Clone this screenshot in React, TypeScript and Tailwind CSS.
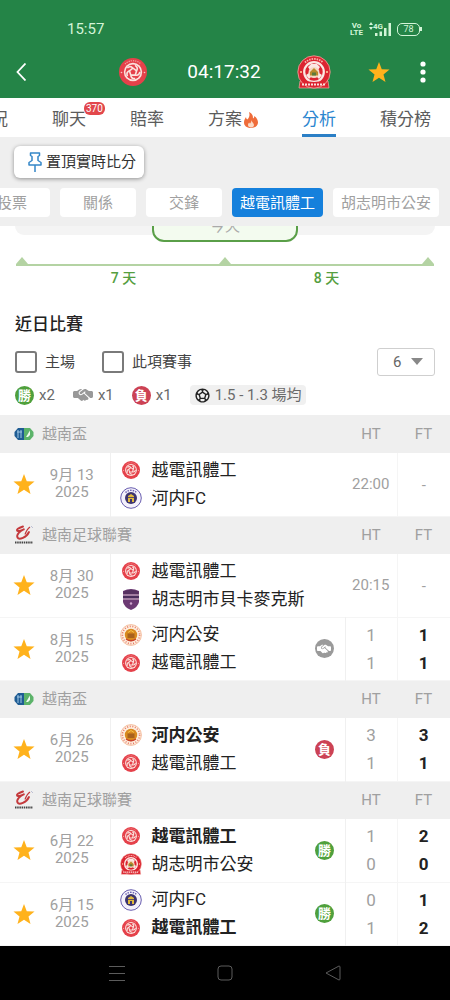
import { ReactNode } from 'react';
import { FaHandshakeSimple } from 'react-icons/fa6';
import { MdSportsSoccer } from 'react-icons/md';

type Club = 'viettel' | 'hanoi' | 'becamex' | 'congan' | 'hcmc';
type Result = 'win' | 'draw' | 'loss';

interface Match {
  date: string;
  year: string;
  clubs: [Club, Club];
  winner?: 0 | 1;
  result?: Result;
  time?: string;
  ht?: [number, number];
  ft?: [number, number];
}

const CLUB_NAMES: Record<Club, string> = {
  viettel: '越電訊體工',
  hanoi: '河内FC',
  becamex: '胡志明市貝卡麥克斯',
  congan: '河内公安',
  hcmc: '胡志明市公安',
};

const LEAGUES: { name: string; cup: boolean; matches: Match[] }[] = [
  {
    name: '越南盃',
    cup: true,
    matches: [{ date: '9月 13', year: '2025', clubs: ['viettel', 'hanoi'], time: '22:00' }],
  },
  {
    name: '越南足球聯賽',
    cup: false,
    matches: [
      { date: '8月 30', year: '2025', clubs: ['viettel', 'becamex'], time: '20:15' },
      { date: '8月 15', year: '2025', clubs: ['congan', 'viettel'], result: 'draw', ht: [1, 1], ft: [1, 1] },
    ],
  },
  {
    name: '越南盃',
    cup: true,
    matches: [{ date: '6月 26', year: '2025', clubs: ['congan', 'viettel'], winner: 0, result: 'loss', ht: [3, 1], ft: [3, 1] }],
  },
  {
    name: '越南足球聯賽',
    cup: false,
    matches: [
      { date: '6月 22', year: '2025', clubs: ['viettel', 'hcmc'], winner: 0, result: 'win', ht: [1, 0], ft: [2, 0] },
      { date: '6月 15', year: '2025', clubs: ['hanoi', 'viettel'], winner: 1, result: 'win', ht: [0, 1], ft: [1, 2] },
    ],
  },
];

const CHIPS = ['投票', '關係', '交鋒', '越電訊體工', '胡志明市公安'];

function Star({ className }: { className: string }) {
  return (
    <svg viewBox="0 0 24 24" className={className} fill="#ffb21c">
      <path d="M12 1l3 7.9 8.5.4-6.6 5.3 2.2 8.2-7.1-4.6-7.1 4.6 2.2-8.2L.5 9.3 9 8.900z" />
    </svg>
  );
}

function ViettelCrest({ className }: { className: string }) {
  return (
    <svg viewBox="0 0 28 28" className={className}>
      <circle cx="14" cy="14" r="14" fill="#e5414a" />
      <path d="M6 6a11.400 11.400 0 0 1 16 0" fill="none" stroke="#f4a09f" strokeWidth="1.200" strokeDasharray="1.200 1" />
      <circle cx="2.500" cy="14.500" r=".8" fill="#f9c6c2" />
      <circle cx="25.500" cy="14.500" r=".8" fill="#f9c6c2" />
      <circle cx="14" cy="14" r="9.200" fill="#fbe3de" />
      <circle cx="14" cy="14" r="7.600" fill="#e5414a" />
      {[0, 72, 144, 216, 288].map((a) => (
        <path key={a} d="M14 10.200l3.600 2.600M14 10.200C12 8 10 8.500 8.300 10" transform={`rotate(${a} 14 14)`} fill="none" stroke="#fbe3de" strokeWidth="1.600" />
      ))}
    </svg>
  );
}

function HcmcCrest({ className }: { className: string }) {
  return (
    <svg viewBox="0 0 34 34" className={className}>
      <path d="M3 26h28l1 7H2z" fill="#dc2430" stroke="#f2a8a0" strokeWidth=".7" />
      <circle cx="17" cy="17" r="16.200" fill="#dc2430" stroke="#f2a8a0" strokeWidth=".8" />
      <path d="M8 7.500a13 13 0 0 1 18 0" fill="none" stroke="#f6b3ac" strokeWidth="1.800" strokeDasharray="1.500 1" />
      <circle cx="17" cy="17" r="9.800" fill="none" stroke="#fbe9e4" strokeWidth="2.200" />
      <path d="M11 12l3-3h6l3 3-2 3h-8zM9 20l3-2 2 4-2 2zM25 20l-3-2-2 4 2 2z" fill="#fbe9e4" />
      <circle cx="17" cy="17.500" r="5.500" fill="#f6d9c4" />
      <path d="M13 20.500V17l4-4 4 4v3.500z" fill="#b98a2b" />
      <path d="M15 20.500v-3h4v3z" fill="#5c7a3a" />
      <path d="M7 25c6 2.500 14 2.500 20 0v5H7z" fill="#dc2430" />
      <path d="M5 29.500h24" stroke="#fbe0dc" strokeWidth="2" strokeDasharray="2 1" />
      <circle cx="4" cy="17" r="1" fill="#ffd4a0" />
      <circle cx="30" cy="17" r="1" fill="#ffd4a0" />
    </svg>
  );
}

function Crest({ club }: { club: Club }) {
  if (club === 'viettel') return <ViettelCrest className="size-[18px]" />;
  if (club === 'hcmc') return <HcmcCrest className="size-[22px]" />;
  if (club === 'hanoi') {
    return (
      <svg viewBox="0 0 22 22" className="size-[22px]">
        <circle cx="11" cy="11" r="10.300" fill="#f4f1fb" stroke="#6a5fb0" strokeWidth="1" />
        <path d="M5.500 5.500a8 8 0 0 1 11 0" fill="none" stroke="#6a5fb0" strokeWidth="1.400" strokeDasharray="1.500 1" />
        <circle cx="11" cy="11" r="6" fill="#3d3470" />
        <path d="M8 15V9l3-2 3 2v6h-2v-3h-2v3z" fill="#e0b93c" />
        <path d="M8 10.500h6" stroke="#3d3470" strokeWidth=".8" />
      </svg>
    );
  }
  if (club === 'becamex') {
    return (
      <svg viewBox="0 0 18 22" className="h-[22px] w-[18px]">
        <path d="M1 3q8-4 16 0v11q-1 5-8 8-7-3-8-8z" fill="#6c3a73" />
        <path d="M1.500 3.500q7.500-3.500 15 0v2.500h-15z" fill="#553060" />
        <path d="M1 7h16M1 11h16" stroke="#d8bfd0" strokeWidth="1" />
        <path d="M1 9h16" stroke="#3f2a55" strokeWidth="1.500" />
        <circle cx="9" cy="15.500" r="1.200" fill="#cfa6cf" />
      </svg>
    );
  }
  return (
    <svg viewBox="0 0 22 22" className="size-[22px]">
      <circle cx="11" cy="11" r="10.400" fill="#fdeede" stroke="#f2b08c" strokeWidth=".8" />
      <circle cx="11" cy="11" r="8.600" fill="none" stroke="#e8796a" strokeWidth="1.600" strokeDasharray="1 1.600" />
      <circle cx="11" cy="11" r="6.200" fill="#d98a1f" />
      <path d="M7.500 9.500h7v4.500h-7z" fill="#a8611c" />
      <path d="M8 8.500l3-2 3 2" fill="none" stroke="#f5c64a" strokeWidth=".9" />
      <path d="M6 15q5 3.500 10 0" fill="none" stroke="#c8402c" strokeWidth="1.300" />
    </svg>
  );
}

function LeagueLogo({ cup }: { cup: boolean }) {
  if (cup) {
    return (
      <svg viewBox="0 0 20 14" className="h-[14px] w-5">
        <path d="M4 1h7v12H4L.5 9V5z" fill="#1f5c93" />
        <path d="M10 1h6l3.500 4v4L16 13h-6z" fill="#5cb36a" />
        <path d="M4 3v8M7 3v8M3 5h5" stroke="#9fc6e4" strokeWidth="1" />
        <path d="M12 10l4-6.500v4.500l-2 2z" fill="#effaf0" />
      </svg>
    );
  }
  return (
    <svg viewBox="0 0 20 20" className="size-5">
      <path d="M9 1.500C6 2.500 2.500 4 3 5.500S8 5 10.500 4C6 6 2 9.500 3.500 12.500s9 0 11.500-5.500" fill="none" stroke="#c4393c" strokeWidth="1.900" strokeLinecap="round" />
      <path d="M11 9.500q2-5.500 5-7.500" fill="none" stroke="#c4393c" strokeWidth="1.200" />
      <path d="M17.500 1.500l1 1" stroke="#8a8fb8" strokeWidth="1" />
      <path d="M1 17.500h18" stroke="#444" strokeWidth="2" strokeDasharray="1.500 .7" />
    </svg>
  );
}

function ResultBadge({ result }: { result: Result }) {
  if (result === 'draw') {
    return (
      <span className="flex size-[19px] items-center justify-center rounded-full bg-[#9a9a9a] text-white">
        <FaHandshakeSimple size={14} />
      </span>
    );
  }
  return (
    <span className={`flex size-[19px] items-center justify-center rounded-full text-[13px] leading-none font-bold text-white ${result === 'win' ? 'bg-[#4fa03c]' : 'bg-[#cc4254]'}`}>
      {result === 'win' ? '勝' : '負'}
    </span>
  );
}

function StatusBar() {
  return (
    <div className="flex h-[58px] items-center justify-between pr-7 pl-[67px] text-[#d3f5d8]">
      <span className="text-[15px]">15:57</span>
      <div className="flex items-center gap-1.5">
        <span className="text-center text-[8px] leading-[7px] font-bold">
          Vo
          <br />
          LTE
        </span>
        <div className="flex items-end">
          <svg viewBox="0 0 4 8" className="mb-1.5 h-2 w-1" fill="currentColor">
            <path d="M2 0l2 3H0zM2 8L0 5h4z" />
          </svg>
          <span className="mb-1.5 text-[8px] leading-[7px] font-bold">4G</span>
          <svg viewBox="0 0 16 13" className="-ml-2 h-[13px] w-4" fill="currentColor">
            <path d="M0 10h2.500v3H0zM4.500 8.500H7V13H4.500zM9 5h2.500v8H9zM13.500 0H16v13h-2.500z" />
          </svg>
        </div>
        <div className="flex items-center">
          <span className="flex h-[13px] w-[23px] items-center justify-center rounded-[5px] border border-current text-[9px] leading-none">78</span>
          <span className="h-1 w-0.5 bg-current" />
        </div>
      </div>
    </div>
  );
}

function Header() {
  return (
    <header className="bg-[#248447]">
      <StatusBar />
      <div className="flex h-10 items-start justify-between pr-6 pl-4 text-white">
        <button aria-label="返回" className="flex h-7 w-14 items-center">
          <svg viewBox="0 0 10 18" className="h-[18px] w-2.5" fill="none" stroke="currentColor" strokeWidth="1.800">
            <path d="M9.500 .5L1.500 9l8 8.500" />
          </svg>
        </button>
        <div className="ml-2.5 flex h-7 items-center gap-9">
          <ViettelCrest className="size-7" />
          <span className="ml-1 text-[19px] leading-7">04:17:32</span>
          <HcmcCrest className="size-[34px]" />
        </div>
        <div className="flex h-7 items-center gap-[30px]">
          <button aria-label="收藏">
            <Star className="size-[22px]" />
          </button>
          <button aria-label="更多">
            <svg viewBox="0 0 6 24" className="h-6 w-1.5" fill="currentColor">
              <circle cx="3" cy="4" r="2.600" />
              <circle cx="3" cy="12" r="2.600" />
              <circle cx="3" cy="20" r="2.600" />
            </svg>
          </button>
        </div>
      </div>
    </header>
  );
}

function Tab({ children, active }: { children: ReactNode; active?: boolean }) {
  return (
    <a href="#" className={`relative flex h-full shrink-0 items-center border-b-3 pt-2 ${active ? 'border-[#2b7fc6] text-[#2b86cf]' : 'border-transparent'}`}>
      {children}
    </a>
  );
}

function Tabs() {
  return (
    <nav className="-ml-[9px] flex h-[39px] gap-11 overflow-hidden bg-white text-[17px] text-[#5c5c5c]">
      <Tab>況</Tab>
      <Tab>
        聊天
        <span className="absolute top-1 left-8 rounded-md bg-[#e2474b] px-0.5 text-[10px] leading-[13px] text-white">370</span>
      </Tab>
      <Tab>賠率</Tab>
      <Tab>
        方案
        <svg viewBox="0 0 14 16" className="ml-0.5 h-4 w-3.5">
          <path d="M5 0c4 2 4 4.500 4 6.500 1-.5 1.300-1.500 1.300-2.500C13 6 14 8.500 14 10.500c0 3-2.500 5.500-7 5.500S0 13.500 0 10.500C0 8 1 6.500 2 5c.2 1.500.6 2 1.300 2.500C5.500 5.500 6 3 5 0z" fill="#ef6c3a" />
          <path d="M7.200 8c.3 2 2.800 3 2.800 5 0 1.500-1.200 2.500-3 2.500s-3-1-3-2.500c0-1.200.6-2 1.200-2.600.2.700.5 1 .9 1.200C7 10.500 7.400 9.500 7.200 8z" fill="#fbd9c4" />
        </svg>
      </Tab>
      <Tab active>分析</Tab>
      <Tab>積分榜</Tab>
    </nav>
  );
}

function FilterBar() {
  return (
    <div className="overflow-hidden bg-[#efefef] pt-[9px] pb-[9px]">
      <button className="ml-3.5 flex h-8 items-center gap-1 rounded-md bg-white pr-2 pl-3.5 text-[15px] text-[#333] shadow-[0_1px_4px_rgba(0,0,0,0.4)]">
        <svg viewBox="0 0 14 20" className="h-5 w-3.5" fill="none" stroke="#3487c8" strokeWidth="1.500" strokeLinejoin="round">
          <path d="M2.500 1h9v2.500L10 4.500v4l3 2V13H1v-2.500l3-2v-4l-1.500-1zM7 13v7" />
        </svg>
        置頂實時比分
      </button>
      <div className="mt-2.5 -ml-[26px] flex gap-2.5 text-[15px]">
        {CHIPS.map((chip) => (
          <button
            key={chip}
            className={`h-[29px] min-w-[76px] shrink-0 rounded px-2 pt-0.5 ${chip === '越電訊體工' ? 'bg-[#1580dc] text-white' : 'bg-white text-[#a0a0a0]'}`}
          >
            {chip}
          </button>
        ))}
      </div>
    </div>
  );
}

function Triangle() {
  return (
    <svg viewBox="0 0 12 7" className="h-[7px] w-3" fill="#b4d3a3">
      <path d="M6 0l6 7H0z" />
    </svg>
  );
}

function Timeline() {
  return (
    <section>
      <div className="mx-[15px] grid h-4 grid-rows-[16px] overflow-hidden">
        <div className="col-start-1 row-start-1 h-[9px] rounded-b-xl bg-[#f4f4f4]" />
        <div className="col-start-1 row-start-1 flex h-10 w-[146px] items-end justify-center self-end justify-self-center rounded-xl border-2 border-[#5a9f48] bg-[#f3fbef] pb-1 text-[15px] leading-5 text-[#aaa]">
          今天
        </div>
      </div>
      <div className="mx-4 mt-[15px] flex items-end justify-between border-b-2 border-[#b4d3a3]">
        <Triangle />
        <Triangle />
        <Triangle />
      </div>
      <div className="mx-[22px] mt-0.5 grid grid-cols-2 text-center text-[14px] leading-5 font-medium text-[#559e40]">
        <span>7 天</span>
        <span>8 天</span>
      </div>
    </section>
  );
}

function CheckOption({ label }: { label: string }) {
  return (
    <label className="flex items-center gap-2">
      <input type="checkbox" className="size-[22px] appearance-none rounded-[3px] border-2 border-[#7a7a7a] bg-white" />
      {label}
    </label>
  );
}

function Filters() {
  return (
    <section className="px-[15px] text-[15px] text-[#444]">
      <h2 className="mt-6 text-[17px] leading-6 font-medium text-[#222]">近日比賽</h2>
      <div className="mt-3 flex h-7 items-center gap-[27px]">
        <CheckOption label="主場" />
        <CheckOption label="此項賽事" />
        <div className="relative ml-auto">
          <select aria-label="場數" className="h-7 w-[58px] appearance-none rounded-[3px] border border-[#cfcfcf] bg-white pl-[15px] text-[#666]">
            <option>6</option>
          </select>
          <svg viewBox="0 0 12 7" className="pointer-events-none absolute top-[10px] right-3 h-[7px] w-3" fill="#888">
            <path d="M0 0h12L6 7z" />
          </svg>
        </div>
      </div>
      <div className="mt-[9px] flex h-5 items-center gap-[18px] text-[#6a6a6a]">
        <span className="flex items-center gap-[5px]">
          <ResultBadge result="win" />
          x2
        </span>
        <span className="flex items-center gap-[5px]">
          <FaHandshakeSimple size={20} color="#999" />
          x1
        </span>
        <span className="flex items-center gap-[5px]">
          <ResultBadge result="loss" />
          x1
        </span>
        <span className="flex h-5 items-center gap-1 rounded-sm bg-[#f0f0f0] px-1">
          <MdSportsSoccer size={17} color="#222" />
          1.5 - 1.3 場均
        </span>
      </div>
    </section>
  );
}

function MatchRow({ match }: { match: Match }) {
  return (
    <tr className="h-[63px] border-b border-[#f5f5f5]">
      <td>
        <button aria-label="收藏" className="ml-[13px] block">
          <Star className="size-[22px]" />
        </button>
      </td>
      <td className="pr-3.5 text-center text-[15px] leading-[17px] text-[#a0a0a0]">
        {match.date}
        <br />
        {match.year}
      </td>
      <td colSpan={match.result ? 1 : 2} className="border-l border-[#f0f0f0] pl-[9px] text-[17px] text-[#222]">
        {match.clubs.map((club, i) => (
          <div key={club} className={`flex h-7 items-center gap-2.5 ${match.winner === i ? 'font-bold' : ''}`}>
            <span className="flex w-[22px] justify-center">
              <Crest club={club} />
            </span>
            {CLUB_NAMES[club]}
          </div>
        ))}
      </td>
      {match.result && (
        <td className="border-r border-[#f0f0f0]">
          <ResultBadge result={match.result} />
        </td>
      )}
      <td className="border-r border-[#f5f5f5] text-center text-[#a0a0a0]">
        {match.ht ? (
          match.ht.map((n, i) => (
            <div key={i} className="text-[17px] leading-7">
              {n}
            </div>
          ))
        ) : (
          <span className="text-[15px]">{match.time}</span>
        )}
      </td>
      <td className="text-center text-[17px] font-bold text-[#222]">
        {match.ft ? (
          match.ft.map((n, i) => (
            <div key={i} className="leading-7">
              {n}
            </div>
          ))
        ) : (
          <span className="text-[15px] font-normal text-[#a0a0a0]">-</span>
        )}
      </td>
    </tr>
  );
}

function Matches() {
  return (
    <table className="mt-2.5 w-full table-fixed border-collapse">
      <colgroup>
        <col className="w-12" />
        <col className="w-[62px]" />
        <col />
        <col className="w-[30px]" />
        <col className="w-[52px]" />
        <col className="w-[53px]" />
      </colgroup>
      {LEAGUES.map((league, i) => (
        <tbody key={i}>
          <tr className="h-[38px] bg-[#efefef] text-[15px] text-[#a0a0a0]">
            <th colSpan={4} scope="colgroup" className="font-normal">
              <span className="flex items-center gap-2 pl-3.5">
                <LeagueLogo cup={league.cup} />
                {league.name}
              </span>
            </th>
            <th className="font-normal">HT</th>
            <th className="font-normal">FT</th>
          </tr>
          {league.matches.map((match) => (
            <MatchRow key={match.date} match={match} />
          ))}
        </tbody>
      ))}
    </table>
  );
}

function SystemNav() {
  return (
    <div className="flex h-[54px] items-center justify-center gap-[92px] bg-black">
      <svg viewBox="0 0 16 16" className="size-4" stroke="#5c5c5c" strokeWidth="1">
        <path d="M0 1.500h16M0 8.500h16M0 15.500h16" />
      </svg>
      <svg viewBox="0 0 16 16" className="size-4" fill="none" stroke="#5c5c5c">
        <rect x="1" y="1" width="14" height="14" rx="3" />
      </svg>
      <svg viewBox="0 0 16 16" className="size-4" fill="none" stroke="#5c5c5c" strokeLinejoin="round">
        <path d="M1 8L14 1q1 0 1 1v12q0 1-1 1z" />
      </svg>
    </div>
  );
}

export default function App() {
  return (
    <div className="min-h-screen overflow-x-hidden bg-white font-[Roboto,'Noto_Sans_CJK_TC',sans-serif]">
      <Header />
      <Tabs />
      <FilterBar />
      <Timeline />
      <Filters />
      <Matches />
      <SystemNav />
    </div>
  );
}
